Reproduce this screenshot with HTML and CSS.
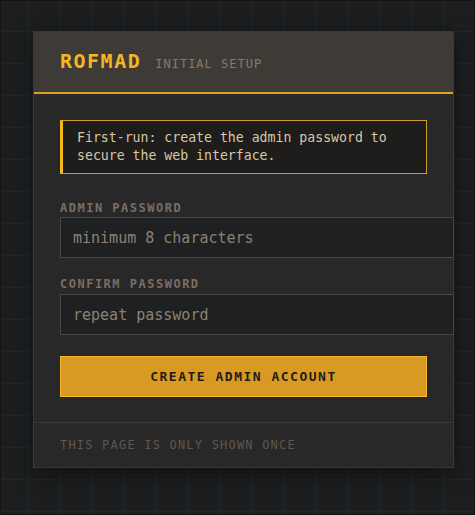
FILE: index.html
```html
<!DOCTYPE html>
<html lang="en">
<head>
<meta charset="utf-8">
<title>ROFMAD — Initial setup</title>
<link rel="stylesheet" href="styles.css">
</head>
<body>
<div class="page">
  <div class="card">
    <div class="card-head">
      <span class="brand">ROFMAD</span>
      <span class="subtitle">INITIAL SETUP</span>
    </div>
    <form class="card-body">
      <div class="notice">First-run: create the admin password to secure the web interface.</div>
      <div class="field">
        <label class="label" for="pw">ADMIN PASSWORD</label>
        <input class="input" id="pw" type="password" placeholder="minimum 8 characters">
      </div>
      <div class="field">
        <label class="label" for="pw2">CONFIRM PASSWORD</label>
        <input class="input" id="pw2" type="password" placeholder="repeat password">
      </div>
      <button class="btn" type="button">CREATE ADMIN ACCOUNT</button>
    </form>
    <div class="card-foot">THIS PAGE IS ONLY SHOWN ONCE</div>
  </div>
</div>
</body>
</html>
```

FILE: styles.css
```css
* { box-sizing: border-box; }
html, body { margin: 0; padding: 0; background: #1c1e1f; }
body { font-family: "DejaVu Sans Mono", "Liberation Mono", monospace; }

.page {
  width: 475px;
  height: 515px;
  border: 1px solid #121314;
  padding: 30px 0 0 32px;
  background-color: #1c1e1f;
  background-image:
    linear-gradient(to right, #222628 1px, transparent 1px),
    linear-gradient(to bottom, #222628 1px, transparent 1px);
  background-size: 32px 32px;
  background-position: 27px 30px;
}

.card {
  width: 421px;
  background: #292828;
  border: 1px solid #3b3733;
  box-shadow: 0 6px 24px rgba(0,0,0,0.45);
}

.card-head {
  height: 62px;
  background: #3e3a36;
  border-bottom: 2px solid #e0a020;
  padding: 17px 26px 0;
  display: flex;
  align-items: baseline;
}
.brand {
  color: #f2b523;
  font-size: 20px;
  font-weight: bold;
  letter-spacing: 1.5px;
  line-height: 24px;
}
.subtitle {
  color: #857a70;
  font-size: 12px;
  letter-spacing: 1px;
  margin-left: 14px;
}

.card-body {
  margin: 0;
  padding: 26px 26px 25px;
  display: flex;
  flex-direction: column;
}

.notice {
  background: #1e1d1b;
  border: 1px solid #d49a28;
  border-left: 3px solid #f4b81c;
  color: #d6c8a6;
  font-size: 13.2px;
  line-height: 18px;
  padding: 8px 14px;
  margin-bottom: 27px;
}

.field {
  display: flex;
  flex-direction: column;
  margin-bottom: 19px;
}
.label {
  color: #7a6e64;
  font-size: 12px;
  font-weight: bold;
  letter-spacing: 1.5px;
  line-height: 14px;
  margin-bottom: 2px;
}
.field + .field .label { margin-bottom: 3px; }
.input {
  box-sizing: content-box;
  width: 100%;
  height: 19px;
  padding: 10px 13px 10px 12px;
  background: #1e2021;
  border: 1px solid #4a4540;
  color: #d8c9a8;
  font-family: inherit;
  font-size: 15px;
  outline: none;
}
.input::placeholder { color: #8b8273; }

.btn {
  margin-top: 2px;
  height: 41px;
  background: #d89a22;
  border: 1px solid #f5b82a;
  color: #1f1d1a;
  font-family: inherit;
  font-size: 13px;
  font-weight: bold;
  letter-spacing: 1.5px;
  cursor: pointer;
}

.card-foot {
  border-top: 1px solid #3c3834;
  padding: 15px 26px 15px;
  color: #5f5750;
  font-size: 12px;
  letter-spacing: 1.2px;
  line-height: 14px;
}
```
